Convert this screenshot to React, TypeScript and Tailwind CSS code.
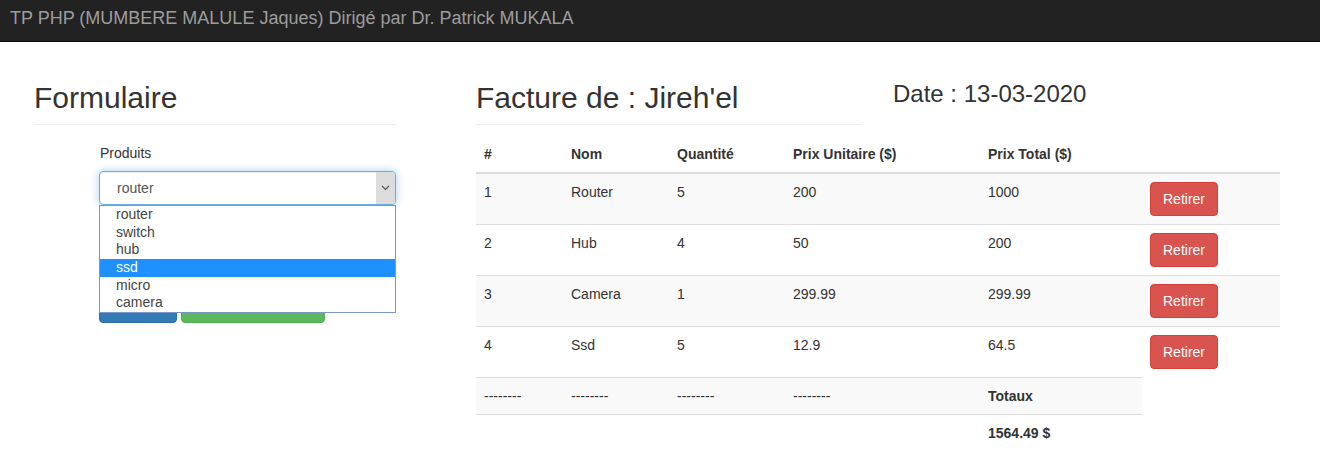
import React from "react";

const rows = [
  { n: "1", nom: "Router", q: "5", pu: "200", pt: "1000" },
  { n: "2", nom: "Hub", q: "4", pu: "50", pt: "200" },
  { n: "3", nom: "Camera", q: "1", pu: "299.99", pt: "299.99" },
  { n: "4", nom: "Ssd", q: "5", pu: "12.9", pt: "64.5" },
];

const options = ["router", "switch", "hub", "ssd", "micro", "camera"];

export default function App() {
  const font = { fontFamily: '"Liberation Sans", Arial, Helvetica, sans-serif' };
  return (
    <div className="min-h-[469px] bg-white text-[14px] leading-[20px] text-[#333]" style={font}>
      <div className="h-[42px] bg-[#222] border-b border-[#080808] flex items-center pl-[10px]">
        <span className="text-[18px] leading-[20px] text-[#9d9d9d] -mt-[6px]">
          TP PHP (MUMBERE MALULE Jaques) Dirigé par Dr. Patrick MUKALA
        </span>
      </div>

      <div className="flex pl-[34px] pt-[39px]">
        {/* Left column */}
        <div className="w-[362px] shrink-0">
          <div className="border-b border-[#eee] pb-[10px]">
            <h2 className="text-[30px] leading-[33px] font-normal">Formulaire</h2>
          </div>
          <div className="pl-[65px] pt-[18px]">
            <div className="h-[20px] mb-[8px] pl-[1px]">Produits</div>
            <div className="relative">
              <div className="h-[34px] w-[297px] rounded-[4px] border border-[#66afe9] shadow-[inset_0_1px_1px_rgba(0,0,0,0.075),0_0_8px_rgba(102,175,233,0.6)] flex items-center pl-[17px] text-[#555] relative bg-white">
                <span>router</span>
                <div className="absolute right-0 top-0 bottom-0 w-[19px] bg-[#dcdcdc] flex items-center justify-center rounded-r-[3px]">
                  <svg width="9" height="6" viewBox="0 0 9 6">
                    <path d="M1 1 L4.5 4.5 L8 1" fill="none" stroke="#555" strokeWidth="1.2" />
                  </svg>
                </div>
              </div>
              <div className="h-[84px]" />
              <div className="flex gap-[4px]">
                <div className="w-[78px] h-[34px] rounded-[4px] bg-[#337ab7] border border-[#2e6da4]" />
                <div className="w-[144px] h-[34px] rounded-[4px] bg-[#5cb85c] border border-[#4cae4c]" />
              </div>
              <div className="absolute left-0 top-[34px] w-[297px] h-[108px] border border-[#7a96c9] bg-white">
                {options.map((o) => (
                  <div
                    key={o}
                    className={
                      "h-[17.67px] leading-[17.67px] pl-[16px] " +
                      (o === "ssd" ? "bg-[#1e90ff] text-white" : "text-[#444]")
                    }
                  >
                    {o}
                  </div>
                ))}
              </div>
            </div>
          </div>
        </div>

        {/* Right column */}
        <div className="w-[804px] ml-[80px] shrink-0">
          <div className="flex">
            <div className="w-[386px] border-b border-[#eee] pb-[10px]">
              <h2 className="text-[30px] leading-[33px] font-normal">Facture de : Jireh'el</h2>
            </div>
            <div className="ml-[31px]">
              <h3 className="text-[24px] leading-[26.4px] font-normal">Date : 13-03-2020</h3>
            </div>
          </div>

          <table className="w-[804px] mt-[11px] border-collapse table-fixed">
            <colgroup>
              <col className="w-[87px]" />
              <col className="w-[106px]" />
              <col className="w-[116px]" />
              <col className="w-[195px]" />
              <col className="w-[162px]" />
              <col className="w-[138px]" />
            </colgroup>
            <thead>
              <tr>
                {["#", "Nom", "Quantité", "Prix Unitaire ($)", "Prix Total ($)", ""].map((h, i) => (
                  <th key={i} className="text-left font-bold p-[8px] border-b-2 border-[#ddd] align-bottom">
                    {h}
                  </th>
                ))}
              </tr>
            </thead>
            <tbody>
              {rows.map((r, i) => (
                <tr key={r.n} className={i % 2 === 0 ? "bg-[#f9f9f9]" : ""}>
                  <td className="p-[8px] align-top border-t border-[#ddd]">{r.n}</td>
                  <td className="p-[8px] align-top border-t border-[#ddd]">{r.nom}</td>
                  <td className="p-[8px] align-top border-t border-[#ddd]">{r.q}</td>
                  <td className="p-[8px] align-top border-t border-[#ddd]">{r.pu}</td>
                  <td className="p-[8px] align-top border-t border-[#ddd]">{r.pt}</td>
                  <td className="p-[8px] align-top border-t border-[#ddd]">
                    <button className="h-[34px] px-[12px] rounded-[4px] bg-[#d9534f] border border-[#d43f3a] text-white text-[14px] leading-[20px]">
                      Retirer
                    </button>
                  </td>
                </tr>
              ))}
              <tr>
                <td className="p-[8px] align-top border-t border-[#ddd] bg-[#f9f9f9]">--------</td>
                <td className="p-[8px] align-top border-t border-[#ddd] bg-[#f9f9f9]">--------</td>
                <td className="p-[8px] align-top border-t border-[#ddd] bg-[#f9f9f9]">--------</td>
                <td className="p-[8px] align-top border-t border-[#ddd] bg-[#f9f9f9]">--------</td>
                <td className="p-[8px] align-top border-t border-[#ddd] bg-[#f9f9f9] font-bold">Totaux</td>
                <td className="p-0 border-0" />
              </tr>
              <tr>
                <td className="p-[8px] align-top border-t border-[#ddd]"></td>
                <td className="p-[8px] align-top border-t border-[#ddd]"></td>
                <td className="p-[8px] align-top border-t border-[#ddd]"></td>
                <td className="p-[8px] align-top border-t border-[#ddd]"></td>
                <td className="p-[8px] align-top border-t border-[#ddd] font-bold">1564.49 $</td>
                <td className="p-0 border-0" />
              </tr>
            </tbody>
          </table>
        </div>
      </div>
    </div>
  );
}
